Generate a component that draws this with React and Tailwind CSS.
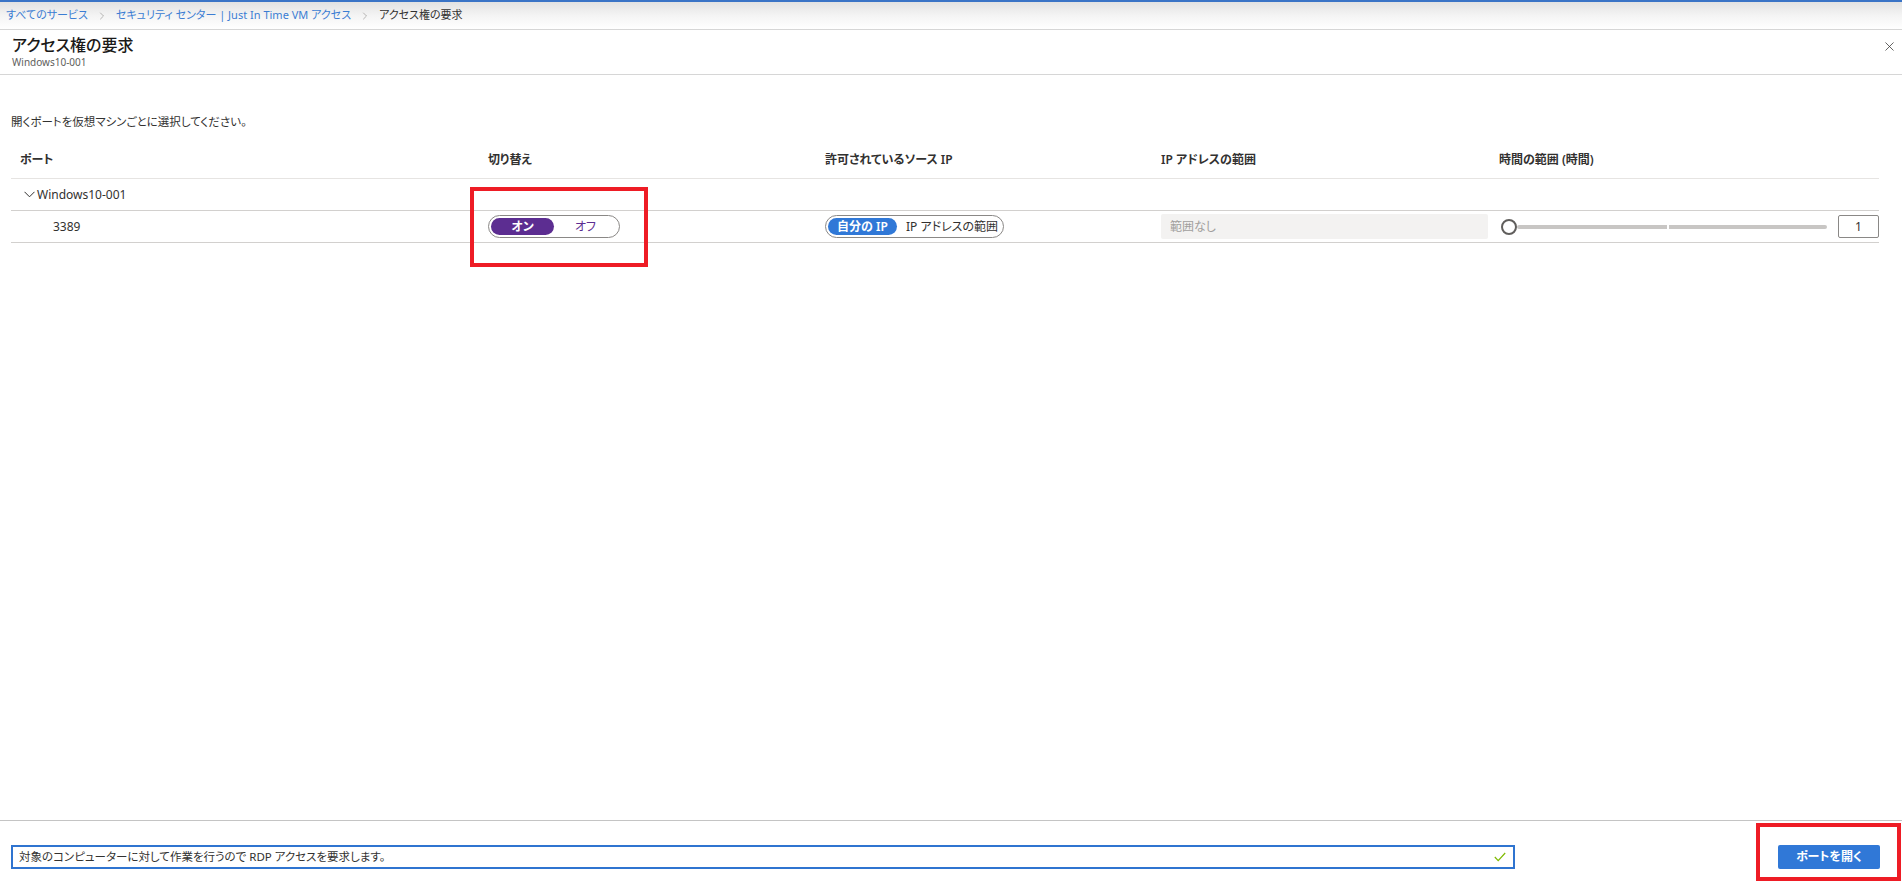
import React from "react";
import { ChevronRight, X } from "lucide-react";

const FONT = "font-['Noto_Sans','Noto_Sans_CJK_JP',sans-serif] [font-feature-settings:'palt']";

function Crumb() {
  return (
    <div className="h-[30px] border-t-[2px] border-[#3a74c6] bg-gradient-to-b from-[#e2e2e2] via-[#f4f4f4] to-white border-b border-b-[#d6d6d6] flex items-center pl-[6px] text-[11px]">
      <span className="text-[#3b7dd3]">すべてのサービス</span>
      <ChevronRight size={12} strokeWidth={1.2} className="text-[#8a8886] mx-[8px]" />
      <span className="text-[#3b7dd3]">セキュリティ センター | Just In Time VM アクセス</span>
      <ChevronRight size={12} strokeWidth={1.2} className="text-[#8a8886] mx-[8px]" />
      <span className="text-[#323130]">アクセス権の要求</span>
    </div>
  );
}

function Header() {
  return (
    <div className="h-[45px] border-b border-[#d6d6d6] flex justify-between pl-[12px] pr-[5px] pt-[4px]">
      <div className="flex flex-col">
        <div className="text-[16px] leading-[22px] text-[#1b1a19] font-medium">アクセス権の要求</div>
        <div className="text-[10px] leading-[12px] text-[#605e5c]">Windows10-001</div>
      </div>
      <div className="pt-[5px]">
        <X size={15} strokeWidth={1.2} className="text-[#323130]" />
      </div>
    </div>
  );
}

function OnOff() {
  return (
    <div className="w-[132px] h-[23px] rounded-full border border-[#8a8886] p-[2px] flex items-center">
      <div className="w-[63px] h-[17px] rounded-full bg-[#5c2d91] text-white text-[12px] font-semibold flex items-center justify-center leading-none">オン</div>
      <div className="flex-1 text-center text-[12px] text-[#5c2d91] leading-none">オフ</div>
    </div>
  );
}

function IpToggle() {
  return (
    <div className="w-[179px] h-[23px] rounded-full border border-[#8a8886] p-[2px] flex items-center">
      <div className="w-[69px] h-[17px] rounded-full bg-[#3078d7] text-white text-[12px] font-semibold flex items-center justify-center leading-none">自分の IP</div>
      <div className="pl-[9px] text-[12px] text-[#323130] leading-none">IP アドレスの範囲</div>
    </div>
  );
}

function Slider() {
  return (
    <div className="relative w-[328px] h-[16px] flex items-center">
      <div className="ml-[18px] flex-1 h-[4px] rounded-full bg-[#c8c6c4] relative">
        <div className="absolute left-[150px] top-0 w-[2px] h-[4px] bg-white" />
      </div>
      <div className="absolute left-[2px] top-0 w-[16px] h-[16px] rounded-full border-2 border-[#605e5c] bg-white" />
    </div>
  );
}

export default function App() {
  const cols = "grid grid-cols-[468px_337px_336px_338px_389px]";
  return (
    <div className={`${FONT} relative w-[1902px] h-[892px] overflow-hidden bg-white text-[#323130] flex flex-col`}>
      <Crumb />
      <Header />

      <div className="px-[11px]">
        <div className="mt-[39px] h-[16px] text-[11.5px] leading-[16px] text-[#323130]">開くポートを仮想マシンごとに選択してください。</div>

        <div className="w-[1868px]">
          <div className={`${cols} h-[49px] items-end pb-[10px] border-b border-[#e6e4e2] text-[12px] leading-[16px] font-semibold text-[#323130]`}>
            <div className="pl-[9px]">ポート</div>
            <div className="pl-[9px]">切り替え</div>
            <div className="pl-[9px]">許可されているソース IP</div>
            <div className="pl-[9px]">IP アドレスの範囲</div>
            <div className="pl-[9px]">時間の範囲 (時間)</div>
          </div>

          <div className="h-[32px] border-b border-[#d2d0ce] flex items-center pl-[13px] text-[12px]">
            <svg width="11" height="7" viewBox="0 0 11 7" className="mr-[2px]">
              <polyline points="0.5,0.8 5.5,5.8 10.5,0.8" fill="none" stroke="#323130" strokeWidth="1" />
            </svg>
            <span>Windows10-001</span>
          </div>

          <div className={`${cols} h-[32px] items-center border-b border-[#d2d0ce] text-[12px]`}>
            <div className="pl-[42px]">3389</div>
            <div className="pl-[9px]"><OnOff /></div>
            <div className="pl-[9px]"><IpToggle /></div>
            <div className="pl-[9px]">
              <div className="w-[327px] h-[25px] rounded-[2px] bg-[#f3f2f1] pl-[9px] flex items-center text-[#a19f9d]">範囲なし</div>
            </div>
            <div className="pl-[9px] flex items-center">
              <Slider />
              <div className="ml-[11px] w-[41px] h-[23px] border border-[#8a8886] rounded-[2px] flex items-center justify-center text-[12px]">1</div>
            </div>
          </div>
        </div>
      </div>

      <div className="flex-1" />

      <div className="h-[72px] border-t border-[#c4c4c4] flex items-start pt-[24px] pl-[11px] pr-[22px]">
        <div className="w-[1504px] h-[24px] border-2 border-[#2f74d0] px-[6px] flex items-center justify-between text-[11.5px] text-[#323130]">
          <span>対象のコンピューターに対して作業を行うので RDP アクセスを要求します。</span>
          <svg width="12" height="10" viewBox="0 0 12 10" className="mr-[1px]">
            <polyline points="0.8,5 4.2,8.6 11.2,1" fill="none" stroke="#7fba00" strokeWidth="1.2" />
          </svg>
        </div>
        <div className="ml-auto w-[102px] h-[24px] rounded-[2px] bg-[#3078d7] text-white text-[12px] font-bold flex items-center justify-center">ポートを開く</div>
      </div>

      <div className="absolute left-[470px] top-[187px] w-[178px] h-[80px] border-4 border-[#ee1c25]" />
      <div className="absolute left-[1756px] top-[823px] w-[145px] h-[58px] border-4 border-[#ee1c25]" />
    </div>
  );
}
